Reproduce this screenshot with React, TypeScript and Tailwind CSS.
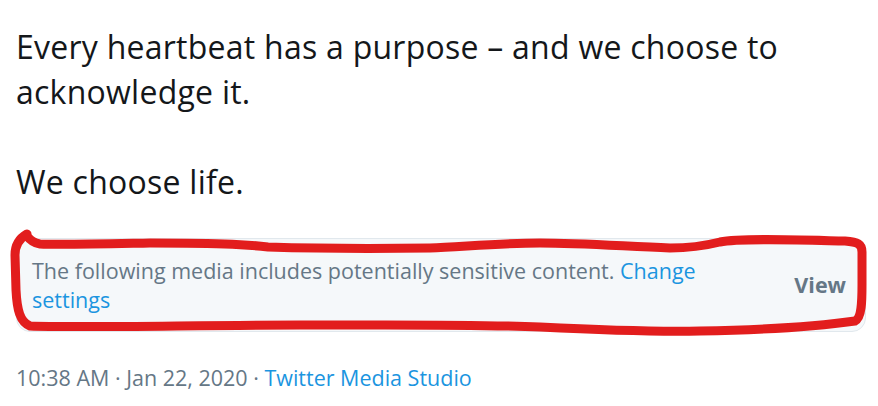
export default function App() {
  return (
    <div
      className="relative h-[406px] w-[878px] overflow-hidden bg-white pl-4"
      style={{ fontFamily: '"Open Sans", "Noto Sans", sans-serif' }}
    >
      <p className="pt-6 text-[32px] leading-[45px] tracking-[0.25px] text-[#14171a]">
        Every heartbeat has a purpose – and we choose to
        <br />
        acknowledge it.
        <br />
        <br />
        We choose life.
      </p>

      <div className="mt-[34px] flex w-[850px] items-center rounded-[14px] border border-[#e1e8ed] bg-[#f5f8fa] py-[17px] pl-[15px] pr-[19px]">
        <p className="flex-1 text-[21.5px] leading-[29px] text-[#657786]">
          The following media includes potentially sensitive content.{" "}
          <span className="text-[#1b95e0]">Change</span>{" "}
          <span className="text-[#1b95e0]">settings</span>
        </p>
        <span className="ml-10 text-[21.5px] font-bold text-[#657786]">View</span>
      </div>

      <p className="mt-[31px] text-[21.5px] leading-[29px] text-[#657786]">
        10:38 AM · Jan 22, 2020 · <span className="text-[#1b95e0]">Twitter Media Studio</span>
      </p>

      {/* hand-drawn red circle around the media warning */}
      <svg
        className="pointer-events-none absolute inset-0"
        width="878"
        height="406"
        viewBox="0 0 878 406"
        fill="none"
      >
        <path
          d="M27 234 C20 238 15 244 15 255 L16 290 C17 310 20 322 30 326 C80 328 200 325 300 325 C400 325 470 324 540 327 C600 330 650 332 700 331 C760 330 820 326 855 321 C862 318 862 300 862 285 L862 252 C862 244 858 242 845 241 C800 240 740 238 720 242 C700 247 685 248 670 248 C620 246 580 243 540 243 C500 243 460 247 430 248 C360 249 300 248 268 247 C250 245 230 243 150 243 C100 244 60 245 40 244 C33 243 30 240 27 236"
          stroke="#e21d1d"
          strokeWidth="9"
          strokeLinecap="round"
          strokeLinejoin="round"
        />
      </svg>
    </div>
  );
}
